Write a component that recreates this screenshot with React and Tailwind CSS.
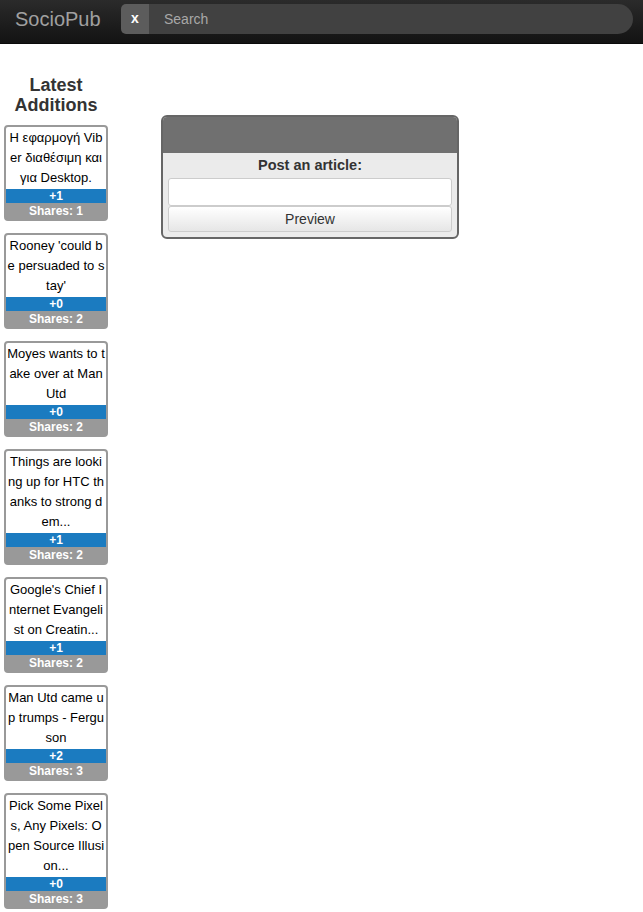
import React from "react";

const articles = [
  { title: "Η εφαρμογή Viber διαθέσιμη και για Desktop.", votes: "+1", shares: 1 },
  { title: "Rooney 'could be persuaded to stay'", votes: "+0", shares: 2 },
  { title: "Moyes wants to take over at Man Utd", votes: "+0", shares: 2 },
  { title: "Things are looking up for HTC thanks to strong dem...", votes: "+1", shares: 2 },
  { title: "Google's Chief Internet Evangelist on Creatin...", votes: "+1", shares: 2 },
  { title: "Man Utd came up trumps - Ferguson", votes: "+2", shares: 3 },
  { title: "Pick Some Pixels, Any Pixels: Open Source Illusion...", votes: "+0", shares: 3 },
];

function ArticleCard({ title, votes, shares }) {
  return (
    <div className="w-[104px] rounded-[4px] border-2 border-[#999] bg-[#999] overflow-hidden">
      <div className="bg-white text-black text-[13px] leading-[20px] text-center break-all px-[1px] pt-[1px] pb-[1px]">
        {title}
      </div>
      <div className="bg-[#1b7bc0] text-white font-bold text-[12px] leading-[14px] text-center">
        {votes}
      </div>
      <div className="bg-[#999] text-white font-bold text-[12px] leading-[16px] text-center">
        Shares: {shares}
      </div>
    </div>
  );
}

export default function App() {
  return (
    <div className="min-h-[912px] bg-white font-['Liberation_Sans',Arial,sans-serif]">
      <header className="h-[44px] flex items-center bg-gradient-to-b from-[#2b2b2b] to-[#131313] border-b border-[#0a0a0a]">
        <div className="w-[121px] pl-[15px] text-[20px] text-[#a0a0a0] leading-none pb-[6px]">SocioPub</div>
        <div className="flex h-[30px] w-[512px] mb-[6px]">
          <button className="w-[28px] bg-[#5c5c5c] rounded-l-[5px] text-white font-bold text-[14px] leading-none pb-[2px]">
            x
          </button>
          <input
            type="text"
            placeholder="Search"
            className="flex-1 bg-[#414141] rounded-r-full pl-[15px] pt-[2px] text-[14px] text-white placeholder:text-[#a8a8a8] outline-none"
          />
        </div>
      </header>

      <div className="flex">
        <aside className="w-[112px] pl-[4px] pt-[31px] flex flex-col">
          <h2 className="w-[104px] text-center font-bold text-[18px] leading-[20px] text-[#333] mb-[10px]">
            Latest Additions
          </h2>
          <div className="flex flex-col gap-[12px]">
            {articles.map((a) => (
              <ArticleCard key={a.title} {...a} />
            ))}
          </div>
        </aside>

        <main className="pl-[49px] pt-[71px]">
          <div className="w-[298px] rounded-[6px] border-2 border-[#666] overflow-hidden bg-[#ebebeb]">
            <div className="h-[36px] bg-[#707070]" />
            <div className="px-[5px] pb-[5px]">
              <div className="text-center font-bold text-[14.5px] leading-[22px] text-[#333] pt-[1px] mb-[2px]">
                Post an article:
              </div>
              <input
                type="text"
                className="block w-full h-[28px] bg-white border border-[#ccc] rounded-[3px] outline-none"
              />
              <button className="block w-[284px] h-[26px] bg-gradient-to-b from-white to-[#e6e6e6] border border-[#ccc] rounded-[3px] text-[14px] text-[#333]">
                Preview
              </button>
            </div>
          </div>
        </main>
      </div>
    </div>
  );
}
